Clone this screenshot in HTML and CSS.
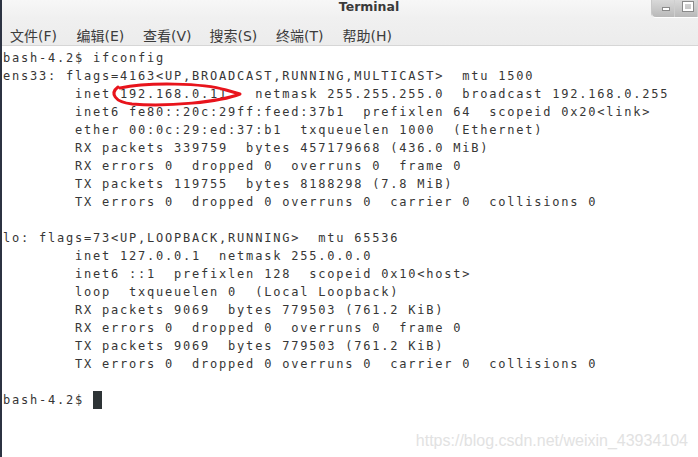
FILE: index.html
```html
<!DOCTYPE html>
<html lang="zh">
<head>
  <meta charset="UTF-8" />
  <title>Terminal</title>
  <link rel="stylesheet" href="styles.css">
</head>
<body>

<div class="window">
  <div class="titlebar">
    <span class="title">Terminal</span>
    <div class="win-controls">
      <span class="win-btn"><span class="min-glyph"></span></span>
      <span class="win-btn"><span class="max-glyph"></span></span>
    </div>
  </div>

  <div class="menubar">
    <span class="menu-item">文件(F)</span>
    <span class="menu-item">编辑(E)</span>
    <span class="menu-item">查看(V)</span>
    <span class="menu-item">搜索(S)</span>
    <span class="menu-item">终端(T)</span>
    <span class="menu-item">帮助(H)</span>
  </div>

  <div class="terminal">
<pre class="output">bash-4.2$ ifconfig
ens33: flags=4163&lt;UP,BROADCAST,RUNNING,MULTICAST&gt;  mtu 1500
        inet 192.168.0.11   netmask 255.255.255.0  broadcast 192.168.0.255
        inet6 fe80::20c:29ff:feed:37b1  prefixlen 64  scopeid 0x20&lt;link&gt;
        ether 00:0c:29:ed:37:b1  txqueuelen 1000  (Ethernet)
        RX packets 339759  bytes 457179668 (436.0 MiB)
        RX errors 0  dropped 0  overruns 0  frame 0
        TX packets 119755  bytes 8188298 (7.8 MiB)
        TX errors 0  dropped 0 overruns 0  carrier 0  collisions 0

lo: flags=73&lt;UP,LOOPBACK,RUNNING&gt;  mtu 65536
        inet 127.0.0.1  netmask 255.0.0.0
        inet6 ::1  prefixlen 128  scopeid 0x10&lt;host&gt;
        loop  txqueuelen 0  (Local Loopback)
        RX packets 9069  bytes 779503 (761.2 KiB)
        RX errors 0  dropped 0  overruns 0  frame 0
        TX packets 9069  bytes 779503 (761.2 KiB)
        TX errors 0  dropped 0 overruns 0  carrier 0  collisions 0

bash-4.2$ <span class="cursor"> </span></pre>

    <!-- red marker drawn around the ip address -->
    <svg class="mark" width="140" height="30" viewBox="0 0 140 30">
      <path d="M12 7 C40 1, 95 2, 118 9 L132 13 C112 21, 60 26, 24 23 C6 21, 2 12, 10 6"
            fill="none" stroke="#e8141c" stroke-width="3" stroke-linecap="round" stroke-linejoin="round"/>
    </svg>

    <div class="watermark">https://blog.csdn.net/weixin_43934104</div>
  </div>
</div>

</body>
</html>
```

FILE: styles.css
```css
html, body {
  margin: 0; padding: 0;
  width: 698px;
  height: 457px;
  overflow: hidden;
  background: #ffffff;
}

.window {
  height: 100%;
  border-left: 2px solid #2c3342;
  display: flex;
  flex-direction: column;
}

.titlebar {
  position: relative;
  height: 18px;
  background: linear-gradient(#f7f7f7, #f0f0f0);
  text-align: center;
  padding-left: 38px;
}

.title {
  display: block;
  font-family: "DejaVu Sans", sans-serif;
  font-weight: 700;
  font-size: 12.5px;
  line-height: 14px;
  color: #3a3a3a;
}

.win-controls {
  position: absolute;
  top: 0; right: 0;
  display: flex;
  width: 46px;
  height: 17px;
  border-bottom-left-radius: 4px;
  overflow: hidden;
  box-shadow: 0 1px 0 #ffffff, -1px 0 0 #c8c8c8;
}

.win-btn {
  position: relative;
  width: 28px;
  height: 17px;
  background: linear-gradient(#d9d9d9, #b9b9b9);
  border-right: 1px solid #cfcfcf;
}

.min-glyph {
  position: absolute;
  left: 10px; top: 7px;
  width: 6px; height: 2px;
  background: #ffffff;
  border: 1px solid #8a8a8a;
}

.max-glyph {
  position: absolute;
  left: 8px; top: 2px;
  width: 6px; height: 5px;
  border: 2px solid #ffffff;
  outline: 1px solid #8a8a8a;
}

.menubar {
  height: 28px;
  box-sizing: border-box;
  display: flex;
  align-items: center;
  padding: 6px 0 0 8px;
  background: linear-gradient(#f0f0f0, #ececec);
  border-bottom: 1px solid #d6d6d6;
  font-family: "DejaVu Sans", "Noto Sans CJK SC", sans-serif;
  font-size: 14px;
  color: #3c3c3c;
}

.menu-item {
  width: 66.5px;
  flex: none;
}

.terminal {
  position: relative;
  flex: 1;
  padding: 3px 0 0 1px;
}

.output {
  margin: 0;
  font-family: "DejaVu Sans Mono", monospace;
  font-size: 12px;
  letter-spacing: 1.78px;
  line-height: 18px;
  color: #363636;
}

.cursor {
  display: inline-block;
  width: 9px;
  height: 18px;
  vertical-align: top;
  background: #2e3436;
}

.mark {
  position: absolute;
  left: 106px;
  top: 35px;
}

.watermark {
  position: absolute;
  right: 10px;
  bottom: 7px;
  font-family: "Liberation Sans", Arial, sans-serif;
  font-size: 16px;
  color: #e2e2e2;
}
```
